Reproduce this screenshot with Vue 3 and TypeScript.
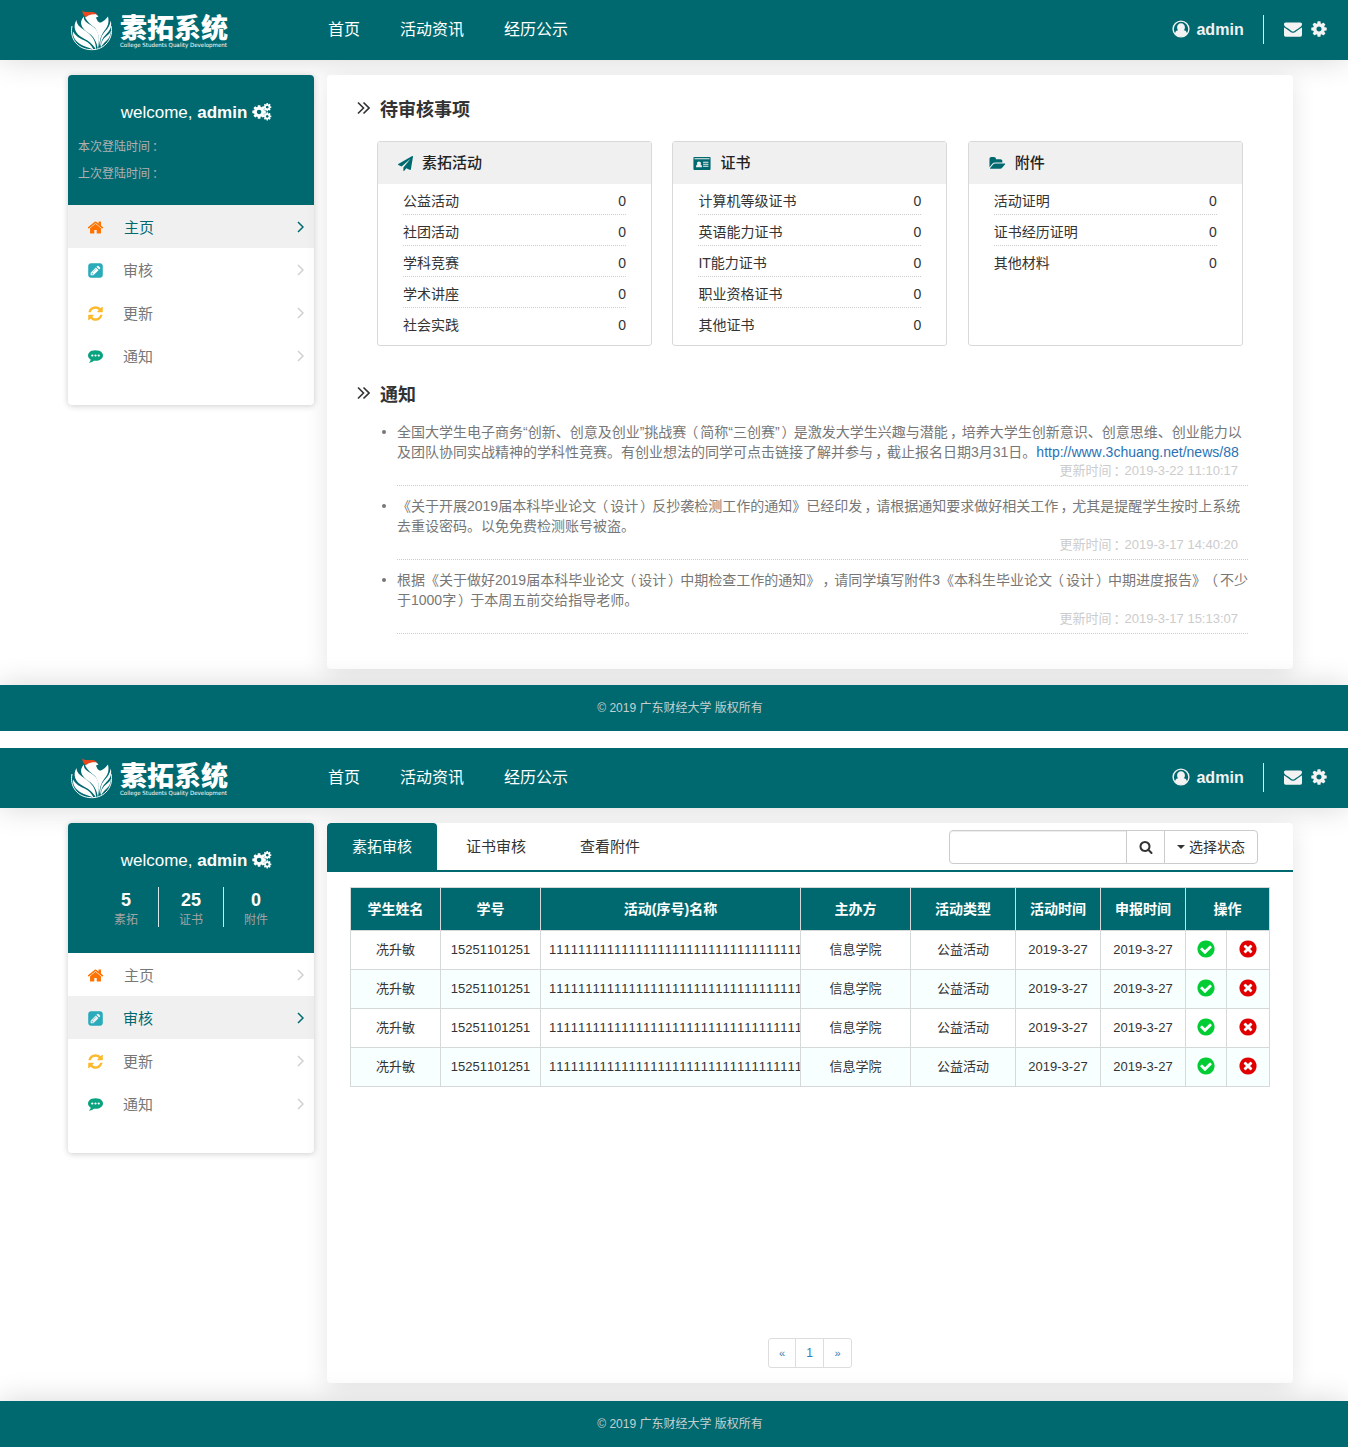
<script setup lang="ts">
import { h } from 'vue'

const disc = 'M1664 896q0 209-103 385.5t-279.5 279.5-385.5 103-385.5-103-279.5-279.5-103-385.5 103-385.5 279.5-279.5 385.5-103 385.5 103 279.5 279.5 103 385.5z'
const gear = 'M1152 896q0-106-75-181t-181-75-181 75-75 181 75 181 181 75 181-75 75-181zm512-109v222q0 12-8 23t-20 13l-185 28q-19 54-39 91 35 50 107 138 10 12 10 25t-9 23q-27 37-99 108t-94 71q-12 0-26-9l-138-108q-44 23-91 38-16 136-29 186-7 28-36 28h-222q-14 0-24.5-8.5t-11.5-21.5l-28-184q-49-16-90-37l-141 107q-10 9-25 9-14 0-25-11-126-114-165-168-7-10-7-23 0-12 8-23 15-21 51-66.5t54-70.5q-27-50-41-99l-183-27q-13-2-21-12.5t-8-23.5v-222q0-12 8-23t19-13l186-28q14-46 39-92-40-57-107-138-10-12-10-24 0-10 9-23 26-36 98.5-107.5t94.5-71.5q13 0 26 10l138 107q44-23 91-38 16-136 29-186 7-28 36-28h222q14 0 24.5 8.5t11.5 21.5l28 184q49 16 90 37l142-107q9-9 24-9 13 0 25 10 129 119 165 170 7 8 7 22 0 12-8 23-15 21-51 66.5t-54 70.5q26 50 41 98l183 28q13 2 21 12.5t8 23.5z'

interface Glyph { box: string; d: string }
const glyphs: Record<string, Glyph> = {
  home: { box: '0 0 1792 1792', d: 'M1472 992v480q0 26-19 45t-45 19h-384v-384h-256v384h-384q-26 0-45-19t-19-45v-480q0-1 .5-3t.5-3l575-474 575 474q1 2 1 6zm223-69l-62 74q-8 9-21 11h-3q-13 0-21-7l-692-577-692 577q-12 8-24 7-13-2-21-11l-62-74q-8-10-7-23.5t11-21.5l719-599q32-26 76-26t76 26l244 204v-195q0-14 9-23t23-9h192q14 0 23 9t9 23v408l219 182q10 8 11 21.5t-7 23.5z' },
  pencil: { box: '-128 0 1792 1792', d: 'M404 1108l152 152-52 52h-56v-96h-96v-56zm414-390q14 13-3 30l-291 291q-17 17-30 3-14-13 3-30l291-291q17-17 30-3zm-274 690l544-544-288-288-544 544v288h288zm608-608l92-92q28-28 28-68t-28-68l-152-152q-28-28-68-28t-68 28l-92 92zm384-384v960q0 119-84.5 203.5t-203.5 84.5h-960q-119 0-203.5-84.5t-84.5-203.5v-960q0-119 84.5-203.5t203.5-84.5h960q119 0 203.5 84.5t84.5 203.5z' },
  refresh: { box: '0 0 1792 1792', d: 'M1639 1056q0 5-1 7-64 268-268 434.5t-478 166.5q-146 0-282.5-55t-243.5-157l-129 129q-19 19-45 19t-45-19-19-45v-448q0-26 19-45t45-19h448q26 0 45 19t19 45-19 45l-137 137q71 66 161 102t187 36q134 0 250-65t186-179q11-17 53-117 8-23 30-23h192q13 0 22.5 9.5t9.5 22.5zm25-800v448q0 26-19 45t-45 19h-448q-26 0-45-19t-19-45 19-45l138-138q-148-137-349-137-134 0-250 65t-186 179q-11 17-53 117-8 23-30 23h-199q-13 0-22.5-9.5t-9.5-22.5v-7q65-268 270-434.5t480-166.5q146 0 284 55.5t245 156.5l130-129q19-19 45-19t45 19 19 45z' },
  comment: { box: '0 0 1792 1792', d: 'M640 896q0-53-37.5-90.5t-90.5-37.5-90.5 37.5-37.5 90.5 37.5 90.5 90.5 37.5 90.5-37.5 37.5-90.5zm384 0q0-53-37.5-90.5t-90.5-37.5-90.5 37.5-37.5 90.5 37.5 90.5 90.5 37.5 90.5-37.5 37.5-90.5zm384 0q0-53-37.5-90.5t-90.5-37.5-90.5 37.5-37.5 90.5 37.5 90.5 90.5 37.5 90.5-37.5 37.5-90.5zm384 0q0 174-120 321.5t-326 233-450 85.5q-110 0-211-18-173 173-435 229-52 10-86 13-12 1-22-6t-13-18q-4-15 20-37 5-5 23.5-21.5t25.5-23.5 23.5-25.5 24-31.5 20.5-37 20-48 14.5-57.5 12.5-72.5q-146-90-229.5-216.5t-83.5-269.5q0-174 120-321.5t326-233 450-85.5 450 85.5 326 233 120 321.5z' },
  gear: { box: '0 0 1792 1792', d: gear },
  envelope: { box: '0 0 1792 1792', d: 'M1792 710v794q0 66-47 113t-113 47h-1472q-66 0-113-47t-47-113v-794q44 49 101 87 362 246 497 345 57 42 92.5 65.5t94.5 48 110 24.5h2q51 0 110-24.5t94.5-48 92.5-65.5q170-123 498-345 57-39 100-87zm0-294q0 79-49 151t-122 123q-376 261-468 325-10 7-42.5 31t-54 38.5-52 32.5-57.5 27-50 9h-2q-23 0-50-9t-57.5-27-52-32.5-54-38.5-42.5-31q-91-64-262-182.5t-205-142.5q-62-42-117-115.5t-55-136.5q0-78 41.5-130t118.5-52h1472q65 0 112.5 47t47.5 113z' },
  plane: { box: '0 0 1792 1792', d: 'M1764 11q33 24 27 64l-256 1536q-5 29-32 45-14 8-31 8-11 0-24-5l-453-185-242 295q-18 23-49 23-13 0-22-4-19-7-30.5-23.5t-11.5-36.5v-349l864-1059-1069 925-395-162q-37-14-40-55-2-40 32-59l1664-960q15-9 32-9 20 0 36 11z' },
  card: { box: '0 0 2048 1792', d: 'M100 128h1848q100 0 100 100v1336q0 100-100 100h-1848q-100 0-100-100v-1336q0-100 100-100zM128 256v128h1792v-128zM300 1330h724q0-240-180-330 60-60 60-150 0-200-242-200t-242 200q0 90 60 150-180 90-180 330zM1152 690v128h640v-128zM1152 930v128h640v-128zM1152 1170v128h640v-128z' },
  folder: { box: '0 0 1920 1792', d: 'M1879 952q0 31-31 66l-336 396q-43 51-120.5 86.5t-143.5 35.5h-1088q-34 0-60.5-13t-26.5-43q0-31 31-66l336-396q43-51 120.5-86.5t143.5-35.5h1088q34 0 60.5 13t26.5 43zm-343-344v160h-832q-94 0-197 47.5t-164 119.5l-337 396-5 6q0-4-.5-12.5t-.5-12.5v-960q0-92 66-158t158-66h320q92 0 158 66t66 158v32h544q92 0 158 66t66 158z' },
  check: { box: '0 0 1792 1792', d: 'M1412 734q0-28-18-46l-91-90q-19-19-45-19t-45 19l-408 407-226-226q-19-19-45-19t-45 19l-91 90q-18 18-18 46 0 27 18 45l362 362q19 19 45 19 27 0 46-19l543-543q18-18 18-45z' + disc },
  times: { box: '0 0 1792 1792', d: 'M1277 1122q0-26-19-45l-181-181 181-181q19-19 19-45 0-27-19-46l-90-90q-19-19-46-19-26 0-45 19l-181 181-181-181q-19-19-45-19-27 0-46 19l-90 90q-19 19-19 46 0 26 19 45l181 181-181 181q-19 19-19 45 0 27 19 46l90 90q19 19 46 19 26 0 45-19l181-181 181 181q19 19 45 19 27 0 46-19l90-90q19-19 19-46z' + disc },
  search: { box: '0 0 1792 1792', d: 'M1216 832q0-185-131.5-316.5t-316.5-131.5-316.5 131.5-131.5 316.5 131.5 316.5 316.5 131.5 316.5-131.5 131.5-316.5zm512 832q0 52-38 90t-90 38q-54 0-90-38l-343-342q-179 124-399 124-143 0-273.5-55.5t-225-150-150-225-55.5-273.5 55.5-273.5 150-225 225-150 273.5-55.5 273.5 55.5 225 150 150 225 55.5 273.5q0 220-124 399l343 343q37 37 37 90z' },
}

const Icon = (props: { name: string; w: number; h?: number }) =>
  h('svg', { viewBox: glyphs[props.name].box, width: props.w, height: props.h ?? props.w, fill: 'currentColor', 'fill-rule': 'evenodd' }, [
    h('path', { d: glyphs[props.name].d }),
  ])
Icon.props = ['name', 'w', 'h']

// Full-width commas, colons and brackets are nudged towards the middle of their cell.
const nudge: Record<string, string> = { '，': 'mid', '：': 'mid', '（': 'open', '）': 'close' }
const Txt = (props: { t: string }) =>
  props.t.split(/([，：（）])/).map((s) => (nudge[s] ? h('span', { class: ['punct', nudge[s]] }, s) : s))
Txt.props = ['t']

const screens = [
  { id: 'home', active: 0 },
  { id: 'audit', active: 1 },
]
const nav = ['首页', '活动资讯', '经历公示']
const menu = [
  { icon: 'home', label: '主页', color: '#ff7200' },
  { icon: 'pencil', label: '审核', color: '#2aabba' },
  { icon: 'refresh', label: '更新', color: '#fdb92c' },
  { icon: 'comment', label: '通知', color: '#0aa37f' },
]
const stats = [
  { n: '5', label: '素拓' },
  { n: '25', label: '证书' },
  { n: '0', label: '附件' },
]
const cards = [
  { icon: 'plane', w: 15, title: '素拓活动', rows: ['公益活动', '社团活动', '学科竞赛', '学术讲座', '社会实践'] },
  { icon: 'card', w: 18, title: '证书', rows: ['计算机等级证书', '英语能力证书', 'IT能力证书', '职业资格证书', '其他证书'] },
  { icon: 'folder', w: 17, title: '附件', rows: ['活动证明', '证书经历证明', '其他材料'] },
]
const notices = [
  {
    lines: ['全国大学生电子商务“创新、创意及创业”挑战赛（简称“三创赛”）是激发大学生兴趣与潜能，培养大学生创新意识、创意思维、创业能力以', '及团队协同实战精神的学科性竞赛。有创业想法的同学可点击链接了解并参与，截止报名日期3月31日。'],
    link: 'http://www.3chuang.net/news/88',
    time: '2019-3-22 11:10:17',
  },
  { lines: ['《关于开展2019届本科毕业论文（设计）反抄袭检测工作的通知》已经印发，请根据通知要求做好相关工作，尤其是提醒学生按时上系统', '去重设密码。以免免费检测账号被盗。'], time: '2019-3-17 14:40:20' },
  { lines: ['根据《关于做好2019届本科毕业论文（设计）中期检查工作的通知》，请同学填写附件3《本科生毕业论文（设计）中期进度报告》（不少', '于1000字）于本周五前交给指导老师。'], time: '2019-3-17 15:13:07' },
]
const tabs = ['素拓审核', '证书审核', '查看附件']
const cols = [90, 100, 260, 110, 105, 85, 85, 41, 43]
const heads = ['学生姓名', '学号', '活动(序号)名称', '主办方', '活动类型', '活动时间', '申报时间']
const record = ['冼升敏', '15251101251', '1'.repeat(35), '信息学院', '公益活动', '2019-3-27', '2019-3-27']
</script>

<template>
  <div v-for="s in screens" :key="s.id" class="screen" :class="s.id">
    <header class="top">
      <svg class="logo" width="170" height="48" viewBox="0 -2 170 48">
        <path d="M2 18C-.5 30 7 41.500 21.500 41.700C35 42 44 30 41 18" fill="none" stroke="#fff" stroke-width="1" />
        <g fill="#fff">
          <path d="M14 8.500C13 14 19 15.500 24 19.500C29.500 24 29.500 31 28 41C26.500 34 24.500 29 18.500 25C12 21 8 14.500 14 8.500Z" />
          <path d="M6.500 12C6.500 18 12 20 17.500 24.500C23.500 29.500 26 34 26 41.500C22.500 36 19 33 13 30C5 26 2.500 18.500 6.500 12Z" />
          <path d="M3 23.500C6 28.500 10 30.500 14.500 32.500C19 34.500 21.500 37.500 23.500 41.500C19 39.500 14 38.500 10 36C5.500 33 2.500 29 3 23.500Z" />
          <path d="M15 9.500C18 5 23 4.500 26 6L28.500 8.500L26 9.500C27 12 28 15 31 14.500C34 13 36 11 38 8.500C39.500 15 37.500 19 34.500 22.500C31 27 29.500 32 29.200 38C29 31 29 25 25 20C20.500 16.500 17.500 14 15 9.500Z" />
          <path d="M40.800 12.500C42.500 20 38.500 24 35.500 27C32.500 30 31 33.500 30.300 39C29.800 32 31.500 27 35 23.500C38.500 20 39.800 17 40.800 12.500Z" />
          <path d="M41 22.500C40.500 29.500 37.500 32 35 34C33 36 32 37.500 31 39.500C30.800 34 33 31 36 28.500C38.800 26.500 40 25 41 22.500Z" />
        </g>
        <path d="M12.500 2.500C15 5.500 20 3 24 4.300L28 6.800C23 5.800 19 6.500 15.500 9.500C14.500 7.500 12 6 12.500 2.500Z" fill="#e8481c" />
        <text class="brand" x="50" y="29.500" textLength="108">素拓系统</text>
        <text class="brand-sub" x="50" y="39" textLength="107" lengthAdjust="spacingAndGlyphs">College Students Quality Development</text>
      </svg>
      <nav class="nav"><a v-for="n in nav" :key="n">{{ n }}</a></nav>
      <div class="account">
        <svg class="who" width="18" height="18" viewBox="0 0 18 18">
          <circle cx="9" cy="9" r="7.900" fill="none" stroke="currentColor" stroke-width="1.400" />
          <path d="M9 3.200a3.900 3.900 0 0 1 3.900 4c0 1.300-.4 2.200-1.100 3 1.900.2 3 1.400 3.200 3.500C13.500 15.500 11 16.300 9 16.300S4.500 15.500 3 13.700c.2-2.100 1.300-3.300 3.200-3.500-.7-.8-1.100-1.700-1.100-3A3.900 3.900 0 0 1 9 3.200z" fill="currentColor" />
        </svg>
        <b>admin</b>
        <i class="bar" />
        <Icon name="envelope" :w="18" />
        <Icon class="set" name="gear" :w="18" />
      </div>
    </header>

    <div class="body">
      <aside class="side">
        <div class="hello">
          <div class="welcome">
            <span>welcome, <b>admin</b></span>
            <svg width="20" height="18" viewBox="0 0 20 18" fill="currentColor">
              <path :d="gear" transform="translate(-.8 1) scale(.0088)" />
              <path :d="gear" transform="translate(10.500 -.6) scale(.0053)" />
              <path :d="gear" transform="translate(10.500 8.600) scale(.0053)" />
            </svg>
          </div>
          <div v-if="s.id === 'home'" class="logins">
            <p><Txt t="本次登陆时间：" /></p>
            <p><Txt t="上次登陆时间：" /></p>
          </div>
          <div v-else class="stats">
            <div v-for="x in stats" :key="x.label"><b>{{ x.n }}</b><span>{{ x.label }}</span></div>
          </div>
        </div>
        <ul class="menu">
          <li v-for="(m, i) in menu" :key="m.label" :class="{ on: i === s.active }">
            <span class="pic"><Icon :name="m.icon" :w="m.icon === 'comment' ? 15 : 17" :style="{ color: m.color }" /></span>
            <span class="label">{{ m.label }}</span>
            <svg class="chev" width="7" height="12" viewBox="0 0 7 12"><path d="M1 1l5 5-5 5" /></svg>
          </li>
        </ul>
      </aside>

      <main v-if="s.id === 'home'" class="panel">
        <h2>
          <svg width="13" height="14" viewBox="0 0 13 14"><path d="M1 1.500l5.500 5.500L1 12.500M6.500 1.500l5.500 5.500-5.500 5.500" /></svg>待审核事项
        </h2>
        <div class="cards">
          <section v-for="c in cards" :key="c.title" class="card">
            <h3><Icon :name="c.icon" :w="c.w" :h="15" />{{ c.title }}</h3>
            <div v-for="r in c.rows" :key="r" class="line"><span>{{ r }}</span><span>0</span></div>
          </section>
        </div>
        <h2 class="second">
          <svg width="13" height="14" viewBox="0 0 13 14"><path d="M1 1.500l5.500 5.500L1 12.500M6.500 1.500l5.500 5.500-5.500 5.500" /></svg>通知
        </h2>
        <ul class="notices">
          <li v-for="n in notices" :key="n.time">
            <div v-for="(l, i) in n.lines" :key="i" class="row"><Txt :t="l" /><a v-if="i === 1 && n.link">{{ n.link }}</a></div>
            <time><Txt t="更新时间：" />{{ n.time }}</time>
          </li>
        </ul>
      </main>

      <main v-else class="panel">
        <div class="tabs">
          <a v-for="(t, i) in tabs" :key="t" :class="{ on: i === 0 }">{{ t }}</a>
          <div class="finder">
            <input type="text" />
            <button class="go"><Icon name="search" :w="14" /></button>
            <button class="state"><i class="caret" />选择状态</button>
          </div>
        </div>
        <table>
          <colgroup><col v-for="(w, i) in cols" :key="i" :style="{ width: w + 'px' }" /></colgroup>
          <thead>
            <tr><th v-for="x in heads" :key="x">{{ x }}</th><th colspan="2">操作</th></tr>
          </thead>
          <tbody>
            <tr v-for="r in 4" :key="r">
              <td v-for="(x, i) in record" :key="i" :class="{ long: i === 2 }">{{ x }}</td>
              <td><Icon class="ok" name="check" :w="20" /></td>
              <td><Icon class="no" name="times" :w="20" /></td>
            </tr>
          </tbody>
        </table>
        <div class="pager"><a>«</a><a>1</a><a>»</a></div>
      </main>
    </div>

    <footer>© 2019 广东财经大学 版权所有</footer>
  </div>
</template>

<style>
body { margin: 0; background: #fff; }
.punct { display: inline-block; line-height: 1; }
.punct.mid { transform: translateX(.16em); }
.punct.open { transform: translateX(-.14em); }
.punct.close { transform: translateX(.14em); }
</style>

<style scoped>
.screen {
  display: flex;
  flex-direction: column;
  width: 1348px;
  height: 731px;
  overflow: hidden;
  box-sizing: border-box;
  font-family: "Liberation Sans", "Noto Sans CJK SC", sans-serif;
  font-size: 14px;
  font-kerning: none;
  line-height: 20px;
  color: #333;
  text-spacing-trim: space-all;
}
.audit { height: 699px; margin-top: 17px; }
svg { display: block; flex: none; }
p, ul, h2, h3 { margin: 0; padding: 0; }

.top {
  display: flex;
  align-items: center;
  flex: none;
  height: 60px;
  padding: 0 20px 0 70px;
  box-sizing: border-box;
  background: #006970;
  box-shadow: 0 0 30px rgba(0, 0, 0, .16);
  color: #fff;
}
.brand { font: 900 27px "Noto Sans CJK SC", sans-serif; fill: #fff; }
.brand-sub { font: 5.800px "DejaVu Sans", sans-serif; fill: #fff; }
.nav { display: flex; gap: 40px; margin-left: 88px; font-size: 16px; }
.account { display: flex; align-items: center; margin: -2px 0 0 auto; color: #f3f3f3; }
.account b { margin: 2px 0 0 6px; font: bold 16px/20px "Liberation Sans", sans-serif; letter-spacing: .1px; }
.bar { width: 1px; height: 29px; margin: 0 20px 0 19px; background: #e5f0f0; }
.set { margin-left: 8px; }

.body { display: flex; align-items: flex-start; gap: 13px; flex: 1; padding: 15px 0 0 68px; }
.side, .panel { border-radius: 4px; background: #fff; overflow: hidden; }
.side { width: 246px; height: 330px; box-shadow: 0 1px 6px rgba(0, 0, 0, .2); }
.panel { width: 966px; height: 594px; box-shadow: 0 5px 25px rgba(0, 0, 0, .11); }
.audit .panel { height: 560px; }

.hello { height: 130px; background: #006970; color: #fff; }
.welcome { display: flex; justify-content: center; gap: 5px; padding: 28px 0 0 11px; font-size: 17px; line-height: 20px; }
.logins { padding: 11px 10px 0; font-size: 12px; color: #b0b0b0; }
.logins p { height: 27px; line-height: 27px; }
.stats { display: flex; justify-content: center; padding-top: 16px; }
.stats div { display: flex; flex-direction: column; align-items: center; width: 64px; height: 40px; padding-top: 4px; box-sizing: border-box; }
.stats div + div { border-left: 1px solid #d8e8e8; width: 65px; }
.stats b { font-size: 18px; line-height: 19px; }
.stats span { font-size: 12px; line-height: 20px; color: #a3a3a3; }

.menu { list-style: none; }
.menu li { display: flex; align-items: center; height: 43px; padding: 0 10px 0 19px; font-size: 15px; color: #777; }
.pic { display: flex; justify-content: center; width: 17px; margin-top: 2px; }
.menu li:last-child .pic { margin-top: 0; }
.label { margin: 2px 0 0 19px; }
.menu li:first-child .label { margin-left: 20px; }
.menu .on { background: #f0f0f0; color: #006970; }
.chev { margin-left: auto; fill: none; stroke: #d0d0d0; stroke-width: 1.500; }
.on .chev { stroke: #006970; }

h2 { display: flex; align-items: center; gap: 10px; padding: 25px 0 0 30px; font-size: 18px; line-height: 20px; }
h2 svg { margin-top: -4px; fill: none; stroke: #333; stroke-width: 1.600; }
h2.second { padding-top: 39px; }
.cards { display: flex; gap: 20.400px; padding: 21px 0 0 50px; }
.card { width: 275px; height: 205px; box-sizing: border-box; border: 1px solid #d9d9d9; border-radius: 3px; }
h3 { display: flex; align-items: center; gap: 9px; height: 42px; padding-left: 20px; background: #f0f0f0; font-size: 15px; font-weight: 500; color: #222; }
h3 svg { color: #006970; }
.line { display: flex; justify-content: space-between; height: 31px; margin: 0 25px; box-sizing: border-box; border-bottom: 1px dotted #ccc; line-height: 35px; }
.line:last-child { border-bottom: 0; }

.notices { list-style: none; padding: 17px 45px 0 70px; color: #777; }
.notices li { position: relative; height: 63px; padding-top: 1px; border-bottom: 1px dotted #ccc; margin-bottom: 9px; white-space: nowrap; }
.notices li::before { content: ""; position: absolute; left: -15px; top: 9px; width: 4px; height: 4px; border-radius: 50%; background: #777; }
.row { height: 20px; }
.notices li:first-child { margin-top: -1px; }
.notices a { color: #2a72b5; }
time { display: block; height: 16px; padding: 1px 10px 0 0; font-size: 13px; line-height: 16px; text-align: right; color: #ccc; }

.tabs { display: flex; align-items: center; gap: 4px; height: 49px; box-sizing: border-box; border-bottom: 2px solid #006970; }
.tabs > a { width: 110px; height: 47px; line-height: 47px; text-align: center; font-size: 15px; }
.tabs > .on { height: 49px; margin-bottom: -2px; border-radius: 4px 4px 0 0; background: #006970; color: #fff; }
.finder { display: flex; margin: 0 35px 0 auto; }
.finder input, .finder button { height: 34px; box-sizing: border-box; border: 1px solid #ccc; background: #fff; margin: 0; padding: 0; }
.finder input { width: 178px; border-radius: 4px 0 0 4px; box-shadow: inset 0 1px 1px rgba(0, 0, 0, .075); }
.finder button { display: flex; align-items: center; justify-content: center; margin-left: -1px; font: inherit; color: #333; }
.finder .go { width: 39px; }
.finder .state { width: 94px; gap: 4px; border-radius: 0 4px 4px 0; }
.caret { border: 4px solid transparent; border-top-color: #333; border-bottom: 0; }

table { width: 920px; margin: 15px 0 0 23px; border-collapse: collapse; table-layout: fixed; font-size: 13px; line-height: 18px; }
th, td { padding: 0; border: 1px solid #d5d9d9; text-align: center; overflow: hidden; white-space: nowrap; }
th { height: 42px; background: #006970; color: #fff; font-size: 14px; font-weight: bold; }
td { height: 38px; }
td.long { padding-left: 8px; text-align: left; }
tbody tr:nth-child(even) { background: #f7ffff; }
td svg { margin: -2px auto 0; }
.ok { color: #0c3; }
.no { color: #e00000; }

.pager { display: flex; width: 84px; margin: 251px auto 0 441px; }
.pager a { width: 29px; height: 30px; box-sizing: border-box; border: 1px solid #ddd; font-size: 12px; line-height: 28px; text-align: center; color: #337ab7; flex: none; }
.pager a + a { margin-left: -1px; }
.pager a:first-child { border-radius: 3px 0 0 3px; width: 28px; font-size: 11px; }
.pager a:last-child { border-radius: 0 3px 3px 0; font-size: 11px; }

footer { flex: none; height: 46px; padding-left: 12px; box-sizing: border-box; background: #006970; box-shadow: 0 0 30px rgba(0, 0, 0, .16); font-size: 12px; line-height: 46px; text-align: center; color: #c5d0d0; }
</style>
